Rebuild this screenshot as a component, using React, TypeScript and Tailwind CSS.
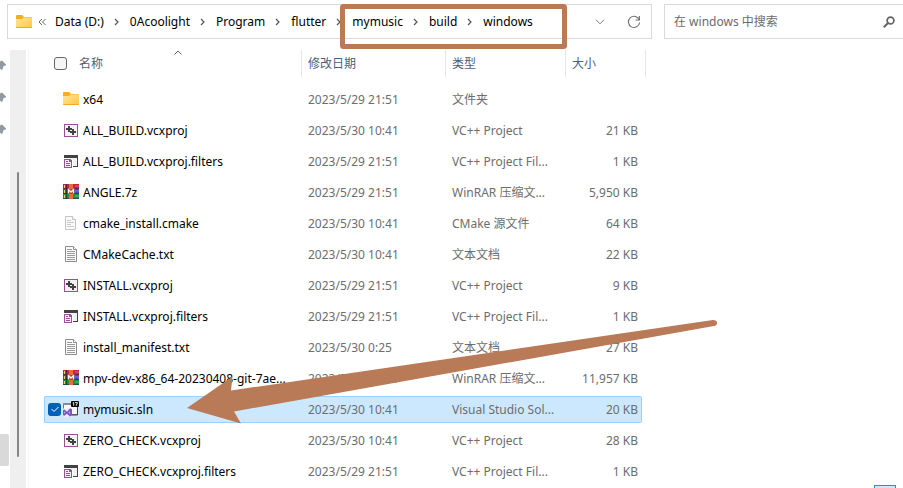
import React from "react";

type Kind = "folder" | "proj" | "filters" | "rar" | "cmake" | "text" | "sln";

type Entry = {
  kind: Kind;
  name: string;
  date: string;
  type: string;
  size: string;
  selected?: boolean;
};

const entries: Entry[] = [
  { kind: "folder", name: "x64", date: "2023/5/29 21:51", type: "文件夹", size: "" },
  { kind: "proj", name: "ALL_BUILD.vcxproj", date: "2023/5/30 10:41", type: "VC++ Project", size: "21 KB" },
  { kind: "filters", name: "ALL_BUILD.vcxproj.filters", date: "2023/5/29 21:51", type: "VC++ Project Fil...", size: "1 KB" },
  { kind: "rar", name: "ANGLE.7z", date: "2023/5/29 21:51", type: "WinRAR 压缩文...", size: "5,950 KB" },
  { kind: "cmake", name: "cmake_install.cmake", date: "2023/5/30 10:41", type: "CMake 源文件", size: "64 KB" },
  { kind: "text", name: "CMakeCache.txt", date: "2023/5/30 10:41", type: "文本文档", size: "22 KB" },
  { kind: "proj", name: "INSTALL.vcxproj", date: "2023/5/29 21:51", type: "VC++ Project", size: "9 KB" },
  { kind: "filters", name: "INSTALL.vcxproj.filters", date: "2023/5/29 21:51", type: "VC++ Project Fil...", size: "1 KB" },
  { kind: "text", name: "install_manifest.txt", date: "2023/5/30 0:25", type: "文本文档", size: "27 KB" },
  { kind: "rar", name: "mpv-dev-x86_64-20230408-git-7ae...", date: "2023/5/29 21:51", type: "WinRAR 压缩文...", size: "11,957 KB" },
  { kind: "sln", name: "mymusic.sln", date: "2023/5/30 10:41", type: "Visual Studio Sol...", size: "20 KB", selected: true },
  { kind: "proj", name: "ZERO_CHECK.vcxproj", date: "2023/5/30 10:41", type: "VC++ Project", size: "28 KB" },
  { kind: "filters", name: "ZERO_CHECK.vcxproj.filters", date: "2023/5/29 21:51", type: "VC++ Project Fil...", size: "1 KB" },
];

const crumbs = ["Data (D:)", "0Acoolight", "Program", "flutter", "mymusic", "build", "windows"];

function FolderIcon() {
  return (
    <svg viewBox="0 0 16 16" className="size-4 shrink-0" aria-hidden="true">
      <defs>
        <linearGradient id="folderFace" x1="0" y1="0" x2="1" y2="1">
          <stop offset="0" stopColor="#ffe69a" />
          <stop offset="1" stopColor="#ffc83d" />
        </linearGradient>
      </defs>
      <path d="M0 2Q0 1 1 1H5.6Q6.2 1 6.7 1.500L8 3H15Q16 3 16 4V8H0Z" fill="#f5b019" />
      <path d="M0 5H5.8L8 3.600H15.2Q16 3.600 16 4.400V13Q16 14 15 14H1Q0 14 0 13Z" fill="url(#folderFace)" />
      <path d="M0 13H16Q16 14 15 14H1Q0 14 0 13Z" fill="#eeaa2c" />
    </svg>
  );
}

function ProjectIcon() {
  return (
    <svg viewBox="0 0 16 16" className="size-4 shrink-0" shapeRendering="crispEdges" aria-hidden="true">
      <rect x="1" y="2" width="14" height="13" fill="#9b4f96" />
      <rect x="2" y="3" width="12" height="11" fill="#f3f1f4" />
      <path d="M5 4h2v2h2v2H7v2H5V8H3V6h2z" fill="#424242" />
      <path d="M9 7h2v2h2v2h-2v2H9v-2H7V9h2z" fill="#424242" />
    </svg>
  );
}

function FiltersIcon() {
  return (
    <svg viewBox="0 0 16 16" className="size-4 shrink-0" shapeRendering="crispEdges" aria-hidden="true">
      <rect x="1" y="2" width="14" height="3" fill="#424242" />
      <rect x="2" y="5" width="12" height="8" fill="#f0eff1" />
      <path d="M14 5h1v9h-5v-1h4z" fill="#424242" />
      <path d="M0 5h8v2h2v8H0z" fill="#ffffff" />
      <path d="M1 6h6l2 2v7H1z" fill="#9b4f96" />
      <path d="M2 7h4v2h2v5H2z" fill="#f5eff5" />
      <path d="M3 8h2v1H3zM3 10h4v1H3zM3 12h4v1H3z" fill="#9b4f96" />
    </svg>
  );
}

function ArchiveIcon() {
  return (
    <svg viewBox="0 0 16 16" className="size-4 shrink-0" aria-hidden="true">
      <rect width="16" height="5" fill="#c8204c" />
      <rect y="5" width="16" height="5" fill="#5048b0" />
      <rect y="10" width="16" height="5" fill="#159447" />
      <path d="M0 4.500h16M0 9.500h16M0 14.500h16" stroke="#262b45" strokeOpacity="0.6" />
      <path d="M1.500 1v3M1.500 6v3M1.500 11v3" stroke="#f4d04d" />
      <path d="M3.500 0v15" stroke="#252642" strokeWidth="0.7" />
      <rect x="6" width="4" height="15" fill="#e96f27" />
      <rect x="5" y="5" width="6" height="5" rx="1" fill="#b83b30" />
      <path d="M5.500 9.500V5.500L8 8 10.500 5.500V9.500" fill="none" stroke="#fff5df" strokeWidth="1.300" />
      <path d="M12 2h4M12 7h4M12 12h4" stroke="#ffffff" strokeOpacity="0.3" />
    </svg>
  );
}

function PageIcon({ faint }: { faint?: boolean }) {
  const edge = faint ? "#c4c4c4" : "#8d8d8d";
  const line = faint ? "#c9c9c9" : "#9a9a9a";
  return (
    <svg viewBox="0 0 16 16" className="size-4 shrink-0" aria-hidden="true">
      {faint ? (
        <>
          <path d="M2.5 1.5H9.5L12.500 4.500V14.500H2.500Z" fill="#fafafa" stroke={edge} />
          <path d="M9.500 1.500V4.500H12.500" fill="#ffffff" stroke={edge} />
          <path d="M4 5.500h4M4 7.500h7M4 9.500h4M4 11.500h7" stroke={line} />
        </>
      ) : (
        <>
          <path d="M2.500.5H10.500L13.500 3.500V15.500H2.500Z" fill="#fafafa" stroke={edge} />
          <path d="M10.500.5V3.500H13.500" fill="#ffffff" stroke={edge} />
          <path d="M4 3.500h5M4 5.500h8M4 7.500h8M4 9.500h8M4 11.500h8M4 13.500h8" stroke={line} />
        </>
      )}
    </svg>
  );
}

function SolutionIcon() {
  return (
    <svg viewBox="0 0 16 16" className="size-4 shrink-0" aria-hidden="true">
      <path d="M.5 2.5H14.5V13.5H.5Z" fill="#f6f6f6" stroke="#777777" />
      <path d="M0 3h9" stroke="#8b8b8b" strokeWidth="2" />
      <path d="M14.5 5v9H9" fill="none" stroke="#3f3f3f" />
      <rect x="8" y="0" width="8" height="6" rx="1" fill="#050505" />
      <path d="M9.7 2l1-.5v3.3M12 1.6h2.5l-1.4 3.2" fill="none" stroke="#ffffff" strokeWidth="0.9" />
      <path d="M0 7.5h9v8.500H0z" fill="#eee9f8" />
      <path d="M0 9.2 1.3 8.4 4 10.7 7 7.2 9 8.2V14.5L7 15.6 4 12.7 1.3 14.7 0 14Z" fill="#7d56c4" />
      <path d="M1.2 10.4v2.3L2.5 11.6zM7 10.300v2.600L5.500 11.6z" fill="#c9b4ed" />
    </svg>
  );
}

function FileIcon({ kind }: { kind: Kind }) {
  if (kind === "folder") return <FolderIcon />;
  if (kind === "proj") return <ProjectIcon />;
  if (kind === "filters") return <FiltersIcon />;
  if (kind === "rar") return <ArchiveIcon />;
  if (kind === "sln") return <SolutionIcon />;
  return <PageIcon faint={kind === "cmake"} />;
}

function Chevron() {
  return (
    <svg viewBox="0 0 5 8" className="mr-[11px] ml-[10px] h-2 w-[5px] shrink-0" aria-hidden="true">
      <path d="M1 1l3 3-3 3" fill="none" stroke="#555555" strokeWidth="1.2" />
    </svg>
  );
}

function AddressBar() {
  return (
    <header className="flex pt-1 pl-[7px]">
      <nav aria-label="路径" className="flex h-[35px] w-[645px] shrink-0 items-center border border-[#d9d9d9] pr-[10px] pl-2 text-black">
        <FolderIcon />
        <button type="button" aria-label="更多" className="mr-[9px] ml-[6px]">
          <svg viewBox="0 0 8 8" className="size-2" aria-hidden="true">
            <path d="M4 1L1 4l3 3M7.500 1l-3 3 3 3" fill="none" stroke="#666666" />
          </svg>
        </button>
        {crumbs.map((c, i) => (
          <React.Fragment key={c}>
            {i > 0 && <Chevron />}
            <button type="button" className="whitespace-nowrap">{c}</button>
          </React.Fragment>
        ))}
        <button type="button" aria-label="展开" className="ml-auto">
          <svg viewBox="0 0 10 6" className="h-[6px] w-[10px]" aria-hidden="true">
            <path d="M1 .8l4 4 4-4" fill="none" stroke="#777777" />
          </svg>
        </button>
        <button type="button" aria-label="刷新" className="ml-[22px]">
          <svg viewBox="0 0 14 14" className="size-[14px]" aria-hidden="true">
            <path d="M12.300 5A5.600 5.600 0 1 0 12.600 7.500" fill="none" stroke="#707070" strokeWidth="1.1" />
            <path d="M12.400 1v4H8.500" fill="none" stroke="#707070" strokeWidth="1.1" />
          </svg>
        </button>
      </nav>
      <label className="ml-3 flex h-[35px] min-w-0 flex-1 items-center border border-r-0 border-[#d9d9d9] pr-2 pl-[9px]">
        <input
          type="text"
          aria-label="搜索"
          placeholder="在 windows 中搜索"
          className="min-w-0 flex-1 bg-transparent outline-none placeholder:text-[#6b6b6b]"
        />
        <svg viewBox="0 0 12 12" className="size-3 shrink-0" aria-hidden="true">
          <circle cx="7.500" cy="4.500" r="3.400" fill="none" stroke="#666666" strokeWidth="1.700" />
          <path d="M5 7L.8 11.200" stroke="#666666" strokeWidth="2" />
        </svg>
      </label>
    </header>
  );
}

function Pin() {
  return (
    <svg viewBox="0 0 7 11" className="h-[11px] w-[7px]" aria-hidden="true">
      <path d="M0 1.500L2 .5 6 4.500V5.500L3.500 6 2.500 9.500 1.500 10 0 8.500Z" fill="#8f9aa3" />
    </svg>
  );
}

function SideRail() {
  return (
    <aside className="flex shrink-0">
      <div className="flex w-[10px] flex-col gap-[21px] pt-[10px]">
        <Pin />
        <Pin />
        <Pin />
        <div className="mt-[278px] h-8 w-[9px] shrink-0 rounded-r-xs bg-[#d9d9d9]" />
      </div>
      <div className="flex w-4 justify-center bg-[#efefef] pt-[122px]">
        <div className="h-[285px] w-[2px] rounded-full bg-[#858585]" />
      </div>
      <div className="ml-[2px] w-px bg-[#f3f3f3]" />
    </aside>
  );
}

function Heading({ children, className }: { children: React.ReactNode; className?: string }) {
  return (
    <th scope="col" className="h-[34px] p-0 text-left align-top font-normal">
      <div className={`flex h-[27px] items-center border-r border-[#e5e5e5] ${className ?? "pl-[6px]"}`}>{children}</div>
    </th>
  );
}

function Row({ entry }: { entry: Entry }) {
  const fill = entry.selected ? "border-[#99d1ff] bg-[#cce8ff]" : "border-transparent";
  return (
    <tr className="h-[31px]">
      <td className="p-0">
        <div className={`flex h-[27px] items-center rounded-l-xs border border-r-0 pb-px pl-[3px] text-black ${fill}`}>
          <span className="flex w-[15px] shrink-0 items-center">
            {entry.selected && (
              <label className="grid size-[13px] cursor-pointer place-items-center">
                <input
                  type="checkbox"
                  defaultChecked
                  aria-label={entry.name}
                  className="col-start-1 row-start-1 size-[13px] appearance-none rounded-[3px] bg-[#005fb8]"
                />
                <svg viewBox="0 0 10 8" className="pointer-events-none col-start-1 row-start-1 h-2 w-[10px]" aria-hidden="true">
                  <path d="M1.500 4l2.500 2.500L8.500 2" fill="none" stroke="#ffffff" />
                </svg>
              </label>
            )}
          </span>
          <FileIcon kind={entry.kind} />
          <span className="ml-1 pt-[2px] whitespace-nowrap">{entry.name}</span>
        </div>
      </td>
      <td className="p-0">
        <div className={`flex h-[27px] items-center border-y pl-[6px] whitespace-nowrap ${fill}`}>{entry.date}</div>
      </td>
      <td className="p-0">
        <div className={`flex h-[27px] items-center border-y pl-[6px] whitespace-nowrap ${fill}`}>{entry.type}</div>
      </td>
      <td className="p-0">
        <div className={`mr-1 flex h-[27px] items-center justify-end rounded-r-xs border border-l-0 pr-[3px] whitespace-nowrap ${fill}`}>
          {entry.size}
        </div>
      </td>
    </tr>
  );
}

function FileTable() {
  return (
    <main className="min-w-0 flex-1 pl-[15px]">
      <table className="w-[602px] table-fixed border-collapse text-[#6d6d6d]">
        <colgroup>
          <col className="w-[258px]" />
          <col className="w-[144px]" />
          <col className="w-[120px]" />
          <col className="w-[80px]" />
        </colgroup>
        <thead className="text-[#4c607a]">
          <tr>
            <Heading className="relative pl-[10px]">
              <input
                type="checkbox"
                aria-label="全选"
                className="mr-3 size-[13px] appearance-none rounded-[3px] border border-[#666666] bg-[#f5f5f5]"
              />
              名称
              <svg viewBox="0 0 8 5" className="absolute top-0 left-[130px] h-[5px] w-2" aria-hidden="true">
                <path d="M.5 4.500L4 1l3.500 3.500" fill="none" stroke="#666666" />
              </svg>
            </Heading>
            <Heading>修改日期</Heading>
            <Heading>类型</Heading>
            <Heading>大小</Heading>
          </tr>
        </thead>
        <tbody>
          {entries.map((e) => (
            <Row key={e.name} entry={e} />
          ))}
        </tbody>
      </table>
    </main>
  );
}

/* Hand-drawn callouts laid over the window: a frame round the path and an arrow to the solution file. */
function Callouts() {
  return (
    <svg viewBox="0 0 903 488" className="pointer-events-none absolute top-0 left-0 h-[488px] w-[903px]" aria-hidden="true">
      <rect x="342.500" y="6.500" width="222" height="40" rx="1" fill="none" stroke="#b97a57" strokeWidth="5" />
      <path d="M187 408L232.500 376.500 231 390.500 713 320Q717 320 717 323 717 325.500 714 326L234 411.500 241 423.500Z" fill="#b97a57" />
    </svg>
  );
}

export default function App() {
  return (
    <div className="relative flex h-screen flex-col overflow-hidden bg-white font-['Noto_Sans','Noto_Sans_CJK_SC',sans-serif] text-[12px] leading-4">
      <AddressBar />
      <div className="mt-[11px] flex min-h-0 flex-1">
        <SideRail />
        <FileTable />
      </div>
      <div className="absolute right-[7px] bottom-0 h-[3px] w-[22px] border border-b-0 border-[#2693d1] bg-[#cce8ff]" />
      <Callouts />
    </div>
  );
}
